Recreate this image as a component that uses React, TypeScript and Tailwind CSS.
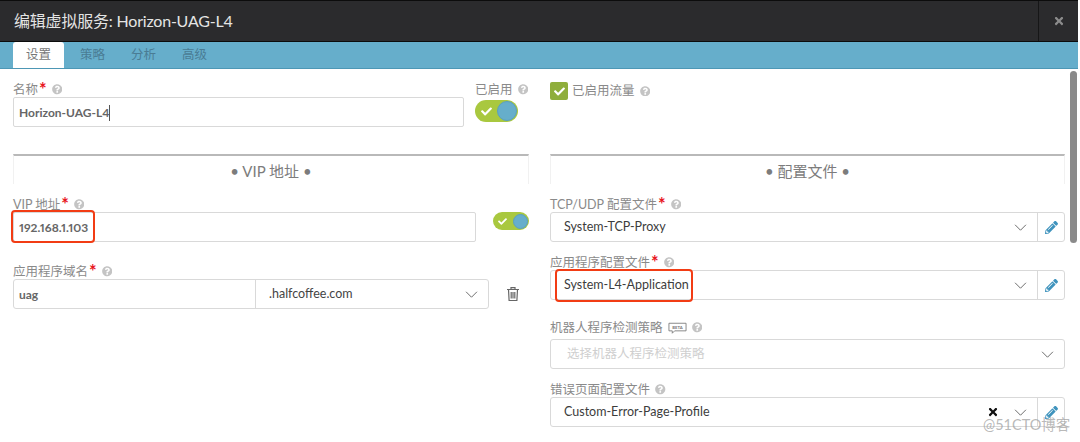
import type { ReactNode } from "react";
import { FaCheck, FaPencilAlt, FaQuestionCircle, FaTimes } from "react-icons/fa";

const CJK = "font-['Lato','Noto_Sans_CJK_SC',sans-serif]";

function Help({ className = "" }: { className?: string }) {
  return <FaQuestionCircle className={`inline-block text-[10.5px] text-[#c4c4c4] ${className}`} />;
}

function Label({ text, required, children }: { text: string; required?: boolean; children?: ReactNode }) {
  return (
    <div className="flex h-[15px] items-center whitespace-nowrap text-[12.5px] leading-[15px] text-[#8a8a8a]">
      <span>{text}</span>
      {required && <span className="ml-px text-[18px] leading-[15px] font-bold text-[#e8141c]">*</span>}
      {children}
      <Help className="ml-[5px]" />
    </div>
  );
}

function Chevron({ className = "" }: { className?: string }) {
  return (
    <svg viewBox="0 0 16 9" className={`h-[7px] w-[13px] ${className}`} fill="none" stroke="#555" strokeWidth="1.1">
      <path d="M1 1l7 7 7-7" />
    </svg>
  );
}

function Toggle({ small }: { small?: boolean }) {
  return (
    <div
      className={`flex items-center justify-between rounded-full bg-[#a9c83f] ${
        small ? "h-[18px] w-[36px] pl-[5px] pr-[1px]" : "h-[22px] w-[43px] pl-[6px] pr-[1px]"
      }`}
    >
      <FaCheck className={`text-white ${small ? "text-[9px]" : "text-[11px]"}`} />
      <div
        className={`rounded-full border border-[#5a9fc0] bg-[#66aecb] ${small ? "h-[15px] w-[15px]" : "h-[20px] w-[20px]"}`}
      />
    </div>
  );
}

function Section({ title }: { title: string }) {
  return (
    <div className="h-[30px] border-x border-t-2 border-[#f1f1f1] border-t-[#b9b9b9] pt-[5px] text-center text-[15px] leading-[20px] text-[#7c7c7c]">
      • {title} •
    </div>
  );
}

function ProfileSelect({ value, clear, children }: { value: string; clear?: boolean; children?: ReactNode }) {
  return (
    <div className="relative flex h-[30px] items-center rounded-[3px] border border-[#d9d9d9] bg-white">
      <span className="flex-1 pl-[13px] pt-px text-[12.5px] text-[#3c3c3c]">{value}</span>
      {clear && <FaTimes className="mr-[15px] text-[12px] text-[#111]" />}
      <Chevron className="mr-[10px]" />
      <div className="flex h-full w-[27px] items-center justify-center border-l border-[#d9d9d9]">
        <FaPencilAlt className="text-[13px] text-[#3f93bd]" />
      </div>
      {children}
    </div>
  );
}

function Callout({ className }: { className: string }) {
  return <div className={`absolute rounded-[4px] border-[2.5px] border-[#f23c14] ${className}`} />;
}

export default function App() {
  return (
    <div className={`relative h-[442px] w-[1080px] overflow-hidden bg-white ${CJK}`}>
      <div className="flex h-[42px] w-[1078px] border-y border-y-[#0c0c0c] bg-[#2b2b2d]">
        <div className="flex-1 pl-[14px] text-[16px] leading-[39px] tracking-[-0.2px] text-[#e4e4e4]">编辑虚拟服务: Horizon-UAG-L4</div>
        <div className="flex w-[40px] items-center justify-center border-l border-[#161617]">
          <FaTimes className="text-[12px] text-[#8c8c8c]" />
        </div>
      </div>

      <div className="flex h-[27px] w-[1078px] items-end gap-[26px] border-b border-[#4d97b5] bg-[#66aecb] pl-[13px] text-[12.5px] text-[#4a7c94]">
        <div className="-mr-[10px] flex h-[26px] w-[51px] items-center justify-center rounded-t-[3px] bg-white text-[#777]">设置</div>
        <div className="flex h-[26px] items-center">策略</div>
        <div className="flex h-[26px] items-center">分析</div>
        <div className="flex h-[26px] items-center">高级</div>
      </div>

      <div className="flex w-[1078px]">
        <div className="ml-[13px] w-[516px]">
          <div className="mt-[13px] flex">
            <div className="w-[451px]">
              <Label text="名称" required />
              <div className="flex h-[30px] items-center rounded-[2px] border border-[#d9d9d9] pl-[5px] pt-px text-[12px] font-bold text-[#666] proportional-nums">
                Horizon-UAG-L4
                <span className="h-[16px] w-px bg-[#555]" />
              </div>
            </div>
            <div className="ml-[11px]">
              <Label text="已启用" />
              <div className="mt-[3px]">
                <Toggle />
              </div>
            </div>
          </div>

          <div className="mt-[27px]">
            <Section title="VIP 地址" />
          </div>

          <div className="mt-[13px] flex">
            <div className="w-[463px]">
              <Label text="VIP 地址" required />
              <div className="relative flex h-[30px] items-center rounded-[2px] border border-[#d9d9d9] pl-[5px] pt-px text-[12px] font-bold text-[#666] proportional-nums">
                192.168.1.103
                <Callout className="-left-[3px] -top-[3px] h-[33px] w-[84px]" />
              </div>
            </div>
            <div className="ml-[17px] mt-[15px]">
              <Toggle small />
            </div>
          </div>

          <div className="mt-[22px]">
            <Label text="应用程序域名" required />
            <div className="flex items-center">
              <div className="flex h-[30px] w-[476px] items-center rounded-[3px] border border-[#d9d9d9] text-[12.5px]">
                <div className="flex h-full w-[242px] items-center border-r border-[#d9d9d9] pl-[5px] pt-px text-[12px] font-bold text-[#666]">uag</div>
                <span className="flex-1 pl-[13px] pt-px text-[#444]">.halfcoffee.com</span>
                <Chevron className="mr-[10px]" />
              </div>
              <svg viewBox="0 0 14 16" className="ml-[17px] h-[16px] w-[14px]" fill="none" stroke="#666" strokeWidth="1.2">
                <path d="M1 3.5h12M5 3.5V1.6h4v1.9M2.5 3.5l.6 11h7.8l.6-11M5.2 6v6.5M7 6v6.5M8.8 6v6.5" />
              </svg>
            </div>
          </div>
        </div>

        <div className="ml-[21px] w-[515px]">
          <div className="mt-[13px] flex h-[18px] items-center text-[12.5px] text-[#8a8a8a]">
            <div className="flex h-[18px] w-[18px] items-center justify-center rounded-[2px] bg-[#8fae3c]">
              <FaCheck className="text-[11px] text-white" />
            </div>
            <span className="ml-[4px]">已启用流量</span>
            <Help className="ml-[5px]" />
          </div>

          <div className="mt-[54px]">
            <Section title="配置文件" />
          </div>

          <div className="mt-[13px]">
            <Label text="TCP/UDP 配置文件" required />
            <ProfileSelect value="System-TCP-Proxy" />
          </div>

          <div className="mt-[13px]">
            <Label text="应用程序配置文件" required />
            <ProfileSelect value="System-L4-Application">
              <Callout className="-top-[2px] left-[4px] h-[33px] w-[138px]" />
            </ProfileSelect>
          </div>

          <div className="mt-[20px]">
            <Label text="机器人程序检测策略">
              <svg viewBox="0 0 20 12" className="ml-[5px] h-[12px] w-[19px]" fill="none" stroke="#777" strokeWidth="0.9">
                <path d="M1 1h18v8H7l-2.5 2.5V9H1z" />
                <text x="10" y="7" textAnchor="middle" fontSize="4.5" fontWeight="700" fill="#777" stroke="none">
                  BETA
                </text>
              </svg>
            </Label>
            <div className="mt-[4px] flex h-[30px] items-center rounded-[3px] border border-[#d9d9d9] pl-[16px] text-[12.5px] text-[#cfcfcf]">
              <span className="flex-1">选择机器人程序检测策略</span>
              <Chevron className="mr-[10px]" />
            </div>
          </div>

          <div className="mt-[13px]">
            <Label text="错误页面配置文件" />
            <ProfileSelect value="Custom-Error-Page-Profile" clear />
          </div>
        </div>
      </div>

      <div className="absolute left-[1070px] top-[71px] h-[172px] w-[7px] rounded-full bg-[#8a8a8a]" />
      <div className="absolute left-[983px] top-[415px] text-[14.5px] leading-[20px] text-[#9a9a9a]/70">@51CTO博客</div>
    </div>
  );
}
